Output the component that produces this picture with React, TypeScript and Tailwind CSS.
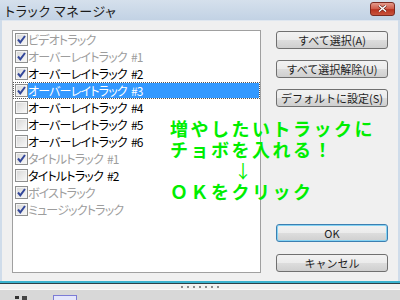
import React from 'react';

type Track = { label: string; checked: boolean; disabled: boolean };

const tracks: Track[] = [
  { label: 'ビデオトラック', checked: true, disabled: true },
  { label: 'オーバーレイトラック #1', checked: true, disabled: true },
  { label: 'オーバーレイトラック #2', checked: true, disabled: false },
  { label: 'オーバーレイトラック #3', checked: true, disabled: false },
  { label: 'オーバーレイトラック #4', checked: false, disabled: false },
  { label: 'オーバーレイトラック #5', checked: false, disabled: false },
  { label: 'オーバーレイトラック #6', checked: false, disabled: false },
  { label: 'タイトルトラック #1', checked: true, disabled: true },
  { label: 'タイトルトラック #2', checked: false, disabled: false },
  { label: 'ボイストラック', checked: true, disabled: true },
  { label: 'ミュージックトラック', checked: true, disabled: true },
];

const SELECTED = 3;

function Check({ checked }: { checked: boolean }) {
  return (
    <span className="flex h-[13px] w-[13px] shrink-0 items-center justify-center border border-[#8e8f8f] bg-[linear-gradient(135deg,#d6d6d6,#fafafa)] shadow-[inset_0_0_0_1px_#f4f4f4]">
      {checked && (
        <svg width="11" height="11" viewBox="0 0 11 11">
          <path d="M2 5.5 L4.3 8.3 L9 2" fill="none" stroke="#33479a" strokeWidth="2" />
        </svg>
      )}
    </span>
  );
}

function Label({ text }: { text: string }) {
  const [name, num] = text.split(' ');
  return (
    <>
      {name}
      {num && <span className="pl-[4px]">{num}</span>}
    </>
  );
}

function Btn({ label, primary }: { label: string; primary?: boolean }) {
  return (
    <button
      className={
        primary
          ? 'h-[18px] w-[112px] rounded-[3px] border border-[#3c7fb1] bg-[linear-gradient(#f2f2f2,#ebebeb_50%,#dddddd_50%,#cfcfcf)] text-[11px] leading-none text-[#1e1e1e] shadow-[inset_0_0_0_1px_#86d3f3]'
          : 'h-[18px] w-[112px] rounded-[3px] border border-[#707070] bg-[linear-gradient(#f2f2f2,#ebebeb_50%,#dddddd_50%,#cfcfcf)] text-[11px] leading-none text-[#1e1e1e]'
      }
    >
      {label}
    </button>
  );
}

export default function App() {
  return (
    <div className="relative flex h-[300px] w-[400px] flex-col overflow-hidden bg-[#d6d6d6] font-['Noto_Sans_CJK_JP',sans-serif]">
      {/* title bar */}
      <div className="flex h-[20px] shrink-0 items-center justify-between bg-[linear-gradient(#d5e0ec,#c2d2e4)] pl-[5px] pr-[5px]">
        <span className="text-[13px] leading-none tracking-[0.6px] text-[#1b1b1b] [font-feature-settings:'palt']">トラック マネージャ</span>
        <span className="mt-[-3px] flex h-[14px] w-[25px] items-center justify-center rounded-[3px] border border-[#7b2b22] bg-[linear-gradient(#e49a8b,#cf5a48_50%,#b8321f_55%,#c8543e)]">
          <svg width="9" height="7" viewBox="0 0 9 7">
            <path d="M1 0.5 L8 6.5 M8 0.5 L1 6.5" stroke="#5a1a12" strokeWidth="2.6" />
            <path d="M1 0.5 L8 6.5 M8 0.5 L1 6.5" stroke="#ffffff" strokeWidth="1.5" />
          </svg>
        </span>
      </div>

      {/* window body */}
      <div className="flex h-[261px] shrink-0 bg-[#cfdcea] px-[2px]">
        <div className="flex flex-1 gap-[15px] border-t border-[#dfe7f0] bg-[#f0f0f0] pl-[10px] pt-[9px]">
          <div className="h-[243px] w-[249px] border border-[#a0a0a0] bg-white">
            {tracks.map((t, i) => (
              <div
                key={t.label}
                className={
                  i === SELECTED
                    ? 'flex h-[17px] items-center border border-dotted border-[#555555]'
                    : 'flex h-[17px] items-center border border-transparent'
                }
              >
                <span className="pl-[1px]">
                  <Check checked={t.checked} />
                </span>
                <span
                  className={
                    i === SELECTED
                      ? 'flex h-[15px] flex-1 items-center bg-[#3399ff] text-[12px] leading-none tracking-[-0.8px] text-white [font-feature-settings:"palt"]'
                      : t.disabled
                        ? 'flex h-[15px] flex-1 items-center text-[12px] leading-none tracking-[-0.8px] text-[#9d9d9d] [font-feature-settings:"palt"]'
                        : 'flex h-[15px] flex-1 items-center text-[12px] leading-none tracking-[-0.8px] text-black [font-feature-settings:"palt"]'
                  }
                >
                  <Label text={t.label} />
                </span>
              </div>
            ))}
          </div>
          <div className="flex h-[243px] flex-col justify-between pb-[1px] pt-[1px]">
            <div className="flex flex-col gap-[11px]">
              <Btn label="すべて選択(A)" />
              <Btn label="すべて選択解除(U)" />
              <Btn label="デフォルトに設定(S)" />
            </div>
            <div className="flex flex-col gap-[12px]">
              <Btn label="OK" primary />
              <Btn label="キャンセル" />
            </div>
          </div>
        </div>
      </div>
      <div className="h-[2px] shrink-0 bg-[#3bb3cf]" />
      <div className="h-[1px] shrink-0 bg-[#2d4148]" />

      {/* app behind the dialog */}
      <div className="flex h-[5px] shrink-0 items-end justify-center gap-[4px] bg-[#f2f2f2] pb-[1px]">
        {[0, 1, 2, 3, 4, 5, 6].map((d) => (
          <span key={d} className="h-[2px] w-[2px] bg-[#8a8a8a]" />
        ))}
      </div>
      <div className="h-[1px] shrink-0 bg-[#fafafa]" />
      <div className="flex flex-1 items-end gap-[26px] bg-[#d8d8d8] pl-[15px]">
        <div className="flex gap-[3px]">
          <span className="h-[3px] w-[4px] bg-[#333333]" />
          <span className="h-[4px] w-[5px] bg-[#444444]" />
        </div>
        <span className="h-[5px] w-[24px] border border-b-0 border-[#7b7bd6] bg-[#e4e6fb]" />
      </div>

      {/* green annotation */}
      <div className="absolute left-[170px] top-[118px] text-[18px] font-bold tracking-[2.5px] text-[#00ee00]">
        <div className="h-[21px] leading-[21px]">増やしたいトラックに</div>
        <div className="h-[21px] leading-[21px]">チョボを入れる！</div>
        <div className="h-[21px] pl-[64px] font-normal leading-[21px]">↓</div>
        <div className="h-[21px] leading-[21px]">ＯＫをクリック</div>
      </div>
    </div>
  );
}
